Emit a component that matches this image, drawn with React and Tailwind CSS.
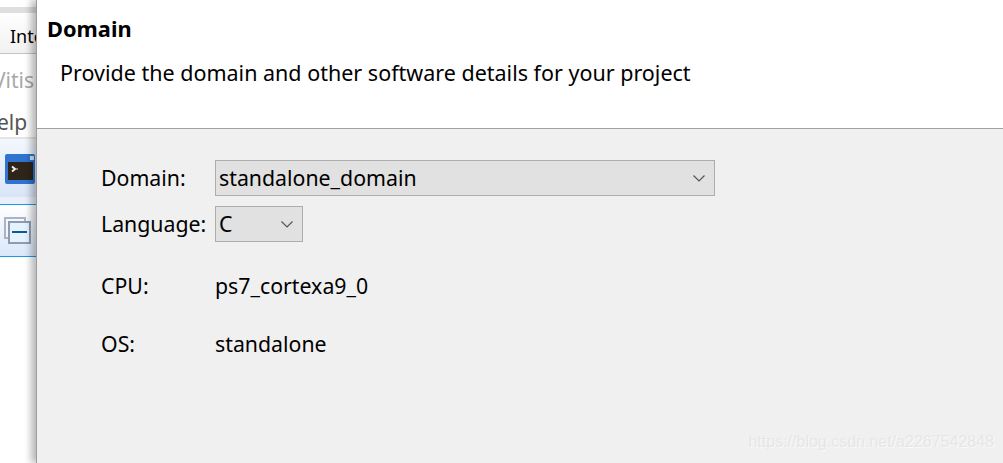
const fontStack = { fontFamily: '"Noto Sans", "Open Sans", sans-serif' };

const Chevron = () => (
  <svg width="12" height="7" viewBox="0 0 12 7" fill="none" stroke="#555" strokeWidth="1.2">
    <path d="M0.5 0.5 L6 6 L11.5 0.5" />
  </svg>
);

const Sidebar = () => (
  <div className="w-[36px] shrink-0 h-full overflow-hidden flex flex-col bg-white">
    <div className="h-[7px] bg-white" />
    <div className="h-[6px] bg-[#dfdfdf]" />
    <div className="h-[41px] flex items-center pl-[10px] pt-[6px] text-[18px] text-black bg-gradient-to-b from-white to-[#f1f1f1] border-b border-[#c4c4c4] whitespace-nowrap">Inte</div>
    <div className="h-[43px] flex items-center pt-[11px] text-[21px] text-[#a8a8a8] whitespace-nowrap"><span className="-ml-[7px]">Vitis</span></div>
    <div className="h-[40px] flex items-center pt-[11px] text-[21px] text-[#555] whitespace-nowrap"><span className="-ml-[3px]">elp</span></div>
    <div className="h-[2px] bg-[#e4e4e4]" />
    <div className="h-[58px] flex items-center pl-[5px] pt-[2px] bg-gradient-to-b from-[#f3f7fd] to-[#d9e5f7]">
      <svg width="30" height="30" viewBox="0 0 30 30">
        <rect x="0" y="0" width="30" height="30" rx="2" fill="#2f74d0" />
        <rect x="25" y="2" width="4" height="4" fill="#cfe6ff" />
        <rect x="3" y="8" width="25" height="18" fill="#2e241a" />
        <path d="M7 12.5 L10 15 L7 17.5" fill="none" stroke="#eee" strokeWidth="2" />
        <rect x="11" y="14" width="2" height="2" fill="#8a8378" />
      </svg>
    </div>
    <div className="h-[7px] bg-[#e9f0fb]" />
    <div className="h-[53px] flex items-center pl-[4px] border-y border-[#1a9ae0] bg-gradient-to-b from-white to-[#dbe7f8]">
      <svg width="27" height="27" viewBox="0 0 27 27">
        <rect x="1" y="1" width="20" height="20" fill="#f4f8fd" stroke="#aab4c6" strokeWidth="2" />
        <rect x="5" y="5" width="21" height="21" fill="#e4f3fd" stroke="#8f9bb0" strokeWidth="2" />
        <rect x="8" y="14" width="15" height="2" fill="#0f5a94" />
      </svg>
    </div>
  </div>
);

const Select = ({ value, width, height }) => (
  <div className={`${width} ${height} flex items-center justify-between bg-[#e1e1e1] border border-[#adadad] pl-[3px] pr-[9px]`}>
    <span className="text-[21.3px] text-black whitespace-nowrap">{value}</span>
    <Chevron />
  </div>
);

export default function App() {
  return (
    <div className="w-[1003px] h-[463px] flex overflow-hidden bg-white" style={fontStack}>
      <Sidebar />
      <div className="relative flex-1 h-full flex flex-col border-l border-[#9c9c9c] shadow-[-5px_0_7px_rgba(0,0,0,0.28)]">
        <div className="h-[128px] shrink-0 bg-white border-b border-[#a0a0a0] box-content">
          <h1 className="pl-[10px] pt-[14px] text-[21.8px] leading-[30px] font-bold text-black">Domain</h1>
          <p className="pl-[23px] pt-[14px] text-[21.5px] leading-[30px] text-black">Provide the domain and other software details for your project</p>
        </div>
        <div className="relative flex-1 bg-[#f0f0f0] pl-[64px] pt-[31px] text-[21.3px] text-black">
          <div className="flex flex-col">
            <div className="flex items-center h-[36px]">
              <span className="w-[114px]">Domain:</span>
              <Select value="standalone_domain" width="w-[500px]" height="h-[36px]" />
            </div>
            <div className="flex items-center h-[36px] mt-[10px]">
              <span className="w-[114px]">Language:</span>
              <Select value="C" width="w-[88px]" height="h-[36px]" />
            </div>
            <div className="flex items-center h-[30px] mt-[29px]">
              <span className="w-[114px]">CPU:</span>
              <span>ps7_cortexa9_0</span>
            </div>
            <div className="flex items-center h-[30px] mt-[28px]">
              <span className="w-[114px]">OS:</span>
              <span>standalone</span>
            </div>
          </div>
          <span className="absolute right-[9px] bottom-[9px] text-[16px] text-[#e6e6e6] [text-shadow:1px_1px_1px_#fafafa]" style={{ fontFamily: '"Liberation Sans", sans-serif' }}>https://blog.csdn.net/a2267542848</span>
        </div>
      </div>
    </div>
  );
}
